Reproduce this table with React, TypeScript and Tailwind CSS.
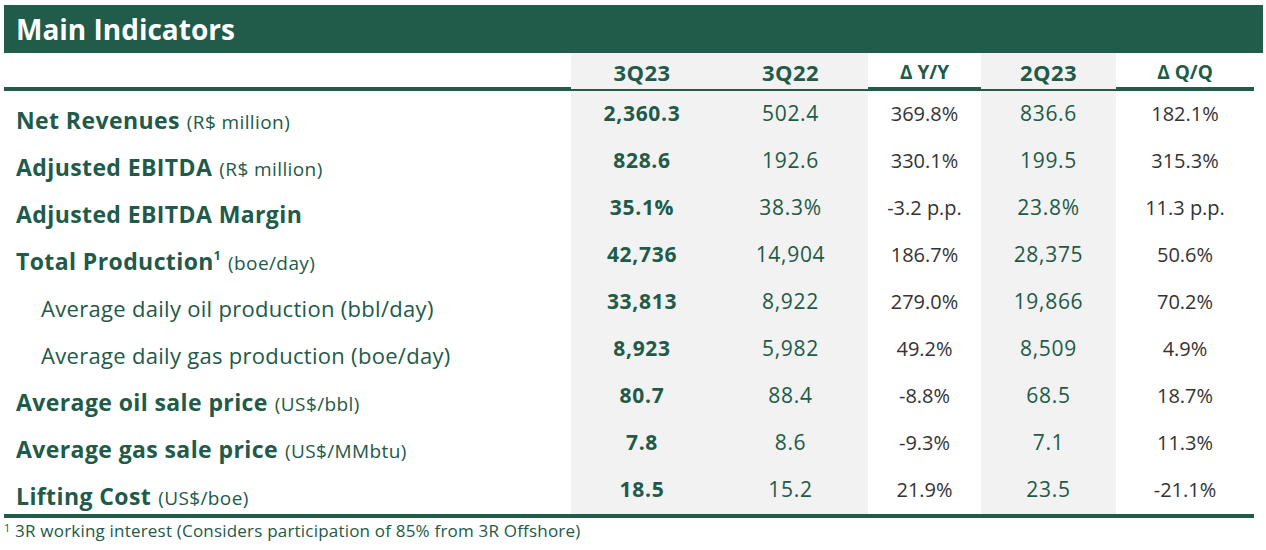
const rows = [
  { label: "Net Revenues", unit: "(R$ million)", v: ["2,360.3", "502.4", "369.8%", "836.6", "182.1%"] },
  { label: "Adjusted EBITDA", unit: "(R$ million)", v: ["828.6", "192.6", "330.1%", "199.5", "315.3%"] },
  { label: "Adjusted EBITDA Margin", unit: "", v: ["35.1%", "38.3%", "-3.2 p.p.", "23.8%", "11.3 p.p."] },
  { label: "Total Production", sup: "1", unit: "(boe/day)", v: ["42,736", "14,904", "186.7%", "28,375", "50.6%"] },
  { label: "Average daily oil production (bbl/day)", sub: true, unit: "", v: ["33,813", "8,922", "279.0%", "19,866", "70.2%"] },
  { label: "Average daily gas production (boe/day)", sub: true, unit: "", v: ["8,923", "5,982", "49.2%", "8,509", "4.9%"] },
  { label: "Average oil sale price", unit: "(US$/bbl)", v: ["80.7", "88.4", "-8.8%", "68.5", "18.7%"] },
  { label: "Average gas sale price", unit: "(US$/MMbtu)", v: ["7.8", "8.6", "-9.3%", "7.1", "11.3%"] },
  { label: "Lifting Cost", unit: "(US$/boe)", v: ["18.5", "15.2", "21.9%", "23.5", "-21.1%"] },
];

const grid = "grid grid-cols-[567px_142px_155px_113px_135px_138px]";

export default function App() {
  return (
    <div className="w-[1266px] h-[550px] bg-white pt-[5px] pl-[4px] text-[#215a48] [font-family:'Open_Sans',Lato,sans-serif]">
      <div className="h-[48px] w-[1259px] bg-[#215c4a] flex items-center pl-[12px]">
        <span className="text-white font-bold text-[28px] leading-none">Main Indicators</span>
      </div>

      <div className="w-[1250px]">
        <div className={`${grid} h-[38px] border-b-[4px] border-[#215c4a] font-bold`}>
          <div />
          <div className="bg-[#f2f2f2] flex items-center justify-center pt-[3px] text-[22px] tracking-[0.5px]">3Q23</div>
          <div className="bg-[#f2f2f2] flex items-center justify-center pt-[3px] text-[22px] tracking-[0.5px]">3Q22</div>
          <div className="flex items-center justify-center pt-[3px] text-[19px]">Δ Y/Y</div>
          <div className="bg-[#f2f2f2] flex items-center justify-center pt-[3px] text-[22px] tracking-[0.5px]">2Q23</div>
          <div className="flex items-center justify-center pt-[3px] text-[19px]">Δ Q/Q</div>
        </div>

        <div className="border-b-[4px] border-[#215c4a]">
          {rows.map((r) => (
            <div key={r.label} className={`${grid} h-[47px]`}>
              <div className={`flex items-center pt-[11px] ${r.sub ? "pl-[37px]" : "pl-[12px]"}`}>
                {r.sub ? (
                  <span className="text-[22px] tracking-[0.3px]">{r.label}</span>
                ) : (
                  <span className="text-[23px] font-bold tracking-[0.4px]">
                    {r.label}
                    {r.sup && <sup className="text-[12px] relative -top-[10px]">{r.sup}</sup>}
                    {r.unit && <span className="text-[19px] font-normal ml-[7px] tracking-[0.4px]">{r.unit}</span>}
                  </span>
                )}
              </div>
              <div className="bg-[#f2f2f2] flex items-center justify-center pb-[2px] text-[21px] font-bold tracking-[0.7px]">{r.v[0]}</div>
              <div className="bg-[#f2f2f2] flex items-center justify-center pb-[2px] text-[21px] tracking-[0.7px]">{r.v[1]}</div>
              <div className="flex items-center justify-center pb-[2px] text-[20px] text-[#333333]">{r.v[2]}</div>
              <div className="bg-[#f2f2f2] flex items-center justify-center pb-[2px] text-[21px] tracking-[0.7px]">{r.v[3]}</div>
              <div className="flex items-center justify-center pb-[2px] text-[20px] text-[#333333]">{r.v[4]}</div>
            </div>
          ))}
        </div>

        <div className="pt-[1px] text-[17px] leading-[24px] tracking-[0.2px] text-[#215a48]">
          <sup className="text-[11px]">1</sup> 3R working interest (Considers participation of 85% from 3R Offshore)
        </div>
      </div>
    </div>
  );
}
